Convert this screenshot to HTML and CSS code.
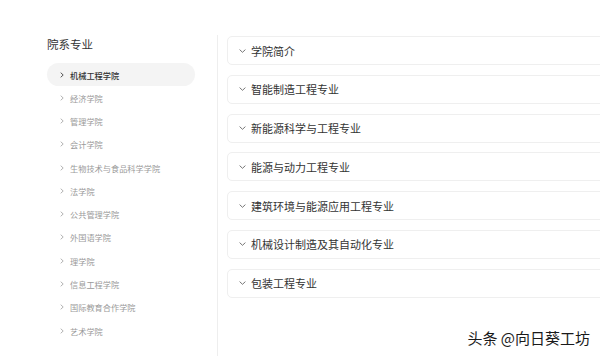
FILE: index.html
```html
<!DOCTYPE html>
<html lang="zh-CN">
<head>
<meta charset="utf-8">
<title>院系专业</title>
<link rel="stylesheet" href="styles.css">
</head>
<body>
<div class="page">
  <aside class="sidebar">
    <h2 class="sidebar-title">院系专业</h2>
    <ul class="college-list">
      <li class="college active"><svg class="arrow-r" viewBox="0 0 4 6"><path d="M0.7 0.7 L3.2 3 L0.7 5.3" /></svg><span>机械工程学院</span></li>
      <li class="college"><svg class="arrow-r" viewBox="0 0 4 6"><path d="M0.7 0.7 L3.2 3 L0.7 5.3" /></svg><span>经济学院</span></li>
      <li class="college"><svg class="arrow-r" viewBox="0 0 4 6"><path d="M0.7 0.7 L3.2 3 L0.7 5.3" /></svg><span>管理学院</span></li>
      <li class="college"><svg class="arrow-r" viewBox="0 0 4 6"><path d="M0.7 0.7 L3.2 3 L0.7 5.3" /></svg><span>会计学院</span></li>
      <li class="college"><svg class="arrow-r" viewBox="0 0 4 6"><path d="M0.7 0.7 L3.2 3 L0.7 5.3" /></svg><span>生物技术与食品科学学院</span></li>
      <li class="college"><svg class="arrow-r" viewBox="0 0 4 6"><path d="M0.7 0.7 L3.2 3 L0.7 5.3" /></svg><span>法学院</span></li>
      <li class="college"><svg class="arrow-r" viewBox="0 0 4 6"><path d="M0.7 0.7 L3.2 3 L0.7 5.3" /></svg><span>公共管理学院</span></li>
      <li class="college"><svg class="arrow-r" viewBox="0 0 4 6"><path d="M0.7 0.7 L3.2 3 L0.7 5.3" /></svg><span>外国语学院</span></li>
      <li class="college"><svg class="arrow-r" viewBox="0 0 4 6"><path d="M0.7 0.7 L3.2 3 L0.7 5.3" /></svg><span>理学院</span></li>
      <li class="college"><svg class="arrow-r" viewBox="0 0 4 6"><path d="M0.7 0.7 L3.2 3 L0.7 5.3" /></svg><span>信息工程学院</span></li>
      <li class="college"><svg class="arrow-r" viewBox="0 0 4 6"><path d="M0.7 0.7 L3.2 3 L0.7 5.3" /></svg><span>国际教育合作学院</span></li>
      <li class="college"><svg class="arrow-r" viewBox="0 0 4 6"><path d="M0.7 0.7 L3.2 3 L0.7 5.3" /></svg><span>艺术学院</span></li>
    </ul>
  </aside>
  <main class="content">
    <div class="panel"><svg class="arrow-d" viewBox="0 0 7 4"><path d="M0.6 0.6 L3.5 3.3 L6.4 0.6" /></svg><span>学院简介</span></div>
    <div class="panel"><svg class="arrow-d" viewBox="0 0 7 4"><path d="M0.6 0.6 L3.5 3.3 L6.4 0.6" /></svg><span>智能制造工程专业</span></div>
    <div class="panel"><svg class="arrow-d" viewBox="0 0 7 4"><path d="M0.6 0.6 L3.5 3.3 L6.4 0.6" /></svg><span>新能源科学与工程专业</span></div>
    <div class="panel"><svg class="arrow-d" viewBox="0 0 7 4"><path d="M0.6 0.6 L3.5 3.3 L6.4 0.6" /></svg><span>能源与动力工程专业</span></div>
    <div class="panel"><svg class="arrow-d" viewBox="0 0 7 4"><path d="M0.6 0.6 L3.5 3.3 L6.4 0.6" /></svg><span>建筑环境与能源应用工程专业</span></div>
    <div class="panel"><svg class="arrow-d" viewBox="0 0 7 4"><path d="M0.6 0.6 L3.5 3.3 L6.4 0.6" /></svg><span>机械设计制造及其自动化专业</span></div>
    <div class="panel"><svg class="arrow-d" viewBox="0 0 7 4"><path d="M0.6 0.6 L3.5 3.3 L6.4 0.6" /></svg><span>包装工程专业</span></div>
  </main>
</div>
<div class="watermark">头条 @向日葵工坊</div>
</body>
</html>
```

FILE: styles.css
```css
* { box-sizing: border-box; }
html, body {
  margin: 0;
  padding: 0;
  background: #fff;
  width: 600px;
  height: 356px;
  overflow: hidden;
  font-family: "Noto Sans CJK SC", "Noto Sans", sans-serif;
}
.page {
  display: flex;
  padding-top: 36px;
  height: 356px;
}
.sidebar {
  width: 218px;
  flex: none;
  padding: 0 22px 0 47px;
  border-right: 1px solid #eeeeee;
  margin-top: -1px;
}
.sidebar-title {
  margin: 0;
  font-size: 11.5px;
  font-weight: 400;
  color: #333;
  line-height: 17px;
  height: 17px;
  margin-top: 1px;
}
.college-list {
  list-style: none;
  margin: 10px 0 0;
  padding: 0;
}
.college {
  display: flex;
  align-items: center;
  height: 23.3px;
  padding-left: 13px;
  border-radius: 12px;
  font-size: 8.2px;
  color: #9a9a9a;
}
.college.active {
  background: #f4f4f4;
  color: #333;
  font-weight: 500;
  height: 23px;
}
.arrow-r {
  width: 4px;
  height: 6px;
  margin-right: 6px;
  fill: none;
  stroke: #aaa;
  stroke-width: 0.9;
}
.college.active .arrow-r { stroke: #444; }
.content {
  flex: 1;
  padding-left: 9px;
  display: flex;
  flex-direction: column;
  gap: 9.8px;
  margin-right: -20px;
}
.panel {
  display: flex;
  align-items: center;
  height: 29px;
  flex: none;
  border: 1px solid #efefef;
  border-radius: 5px;
  padding-left: 11px;
  font-size: 11px;
  color: #333;
}
.arrow-d {
  width: 7px;
  height: 4px;
  margin-right: 5px;
  fill: none;
  stroke: #666;
  stroke-width: 0.9;
}
.watermark {
  position: absolute;
  right: 10px;
  bottom: 9px;
  font-size: 15px;
  line-height: 18px;
  color: #1a1a1a;
  text-shadow: 0 0 1px #fff, 0 0 2px #fff;
}
```
